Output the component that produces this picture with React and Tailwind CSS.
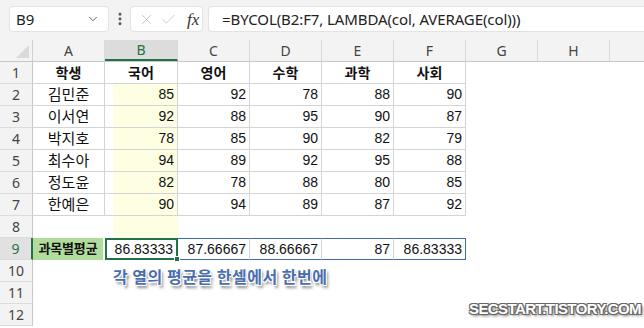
import React from "react";
import { ChevronDown, EllipsisVertical, X, Check } from "lucide-react";

const cols = [
  { key: "A", w: "w-[72px]" },
  { key: "B", w: "w-[73px]" },
  { key: "C", w: "w-[72px]" },
  { key: "D", w: "w-[72px]" },
  { key: "E", w: "w-[72px]" },
  { key: "F", w: "w-[72px]" },
  { key: "G", w: "w-[72px]" },
  { key: "H", w: "w-[72px]" },
];

const heads = ["학생", "국어", "영어", "수학", "과학", "사회"];

const rows = [
  ["김민준", 85, 92, 78, 88, 90],
  ["이서연", 92, 88, 95, 90, 87],
  ["박지호", 78, 85, 90, 82, 79],
  ["최수아", 94, 89, 92, 95, 88],
  ["정도윤", 82, 78, 88, 80, 85],
  ["한예은", 90, 94, 89, 87, 92],
];

const avgs = ["86.83333", "87.66667", "88.66667", "87", "86.83333"];

const line = "border-[#d4d4d4]";
const num = "font-['Liberation_Sans',sans-serif] text-[14px]";
const yellow = "bg-[linear-gradient(to_right,transparent_8px,#fefee3_8px)]";

function RowHead({ n, active }) {
  return (
    <div
      className={
        "w-[33px] shrink-0 h-full flex items-center justify-center text-[14px] border-b border-[#dcdcdc] " +
        (active
          ? "bg-[#e1e1e1] text-[#217346] border-r-2 border-r-[#217346]"
          : "bg-[#f3f3f3] text-[#444] border-r border-r-[#c8c8c8]")
      }
    >
      {n}
    </div>
  );
}

function Cell({ w, className = "", children }) {
  return <div className={`${w} shrink-0 h-full flex items-center px-[3px] whitespace-nowrap ${className}`}>{children}</div>;
}

export default function App() {
  return (
    <div className="relative w-[644px] h-[328px] overflow-hidden bg-white font-['Noto_Sans','Noto_Sans_CJK_KR',sans-serif] text-[#111]">
      {/* formula bar */}
      <div className="h-[40px] bg-[#f3f3f3] flex items-start pt-[6px] pl-[9px]">
        <div className="w-[100px] h-[26px] rounded-[4px] bg-white border border-[#e3e3e3] flex items-center justify-between pl-[6px] pr-[8px]">
          <span className="text-[15px] text-[#222]">B9</span>
          <ChevronDown size={14} strokeWidth={1.6} className="text-[#555]" />
        </div>
        <div className="w-[21px] h-[26px] flex items-center justify-center">
          <EllipsisVertical size={16} strokeWidth={2.4} className="text-[#555]" />
        </div>
        <div className="w-[73px] h-[26px] rounded-[4px] bg-white border border-[#e3e3e3] flex items-center pl-[7px] gap-[5px]">
          <X size={17} strokeWidth={1.2} className="text-[#c2c2c2]" />
          <Check size={17} strokeWidth={1.2} className="text-[#c2c2c2]" />
          <span className="ml-[5px] font-['Liberation_Serif',serif] italic text-[17px] text-[#333] leading-none">fx</span>
        </div>
        <div className="ml-[5px] flex-1 h-[26px] rounded-l-[4px] bg-white border border-r-0 border-[#e3e3e3] flex items-center pl-[13px]">
          <span className="text-[15px] text-[#222] tracking-[-0.1px]">=BYCOL(B2:F7, LAMBDA(col, AVERAGE(col)))</span>
        </div>
      </div>

      {/* column headers */}
      <div className="flex h-[22px] bg-[#f3f3f3] border-b border-[#c8c8c8]">
        <div className="relative w-[33px] shrink-0 border-r border-[#d0d0d0]">
          <div className="absolute right-[3px] bottom-[3px] w-0 h-0 border-l-[13px] border-l-transparent border-b-[13px] border-b-[#dadada]" />
        </div>
        {cols.map((c) => (
          <div
            key={c.key}
            className={
              c.w +
              " shrink-0 flex items-center justify-center text-[14px] border-r border-[#dadada] " +
              (c.key === "B" ? "bg-[#dcdcdc] text-[#217346] border-b-2 border-b-[#217346]" : "text-[#444]")
            }
          >
            {c.key}
          </div>
        ))}
        <div className="flex-1" />
      </div>

      {/* row 1 */}
      <div className="flex h-[22px]">
        <RowHead n={1} />
        {heads.map((h, i) => (
          <Cell key={h} w={cols[i].w} className={`justify-center font-bold text-[14px] border-r border-b ${line}`}>
            {h}
          </Cell>
        ))}
      </div>

      {rows.map((r, ri) => (
        <div key={ri} className="flex h-[22px]">
          <RowHead n={ri + 2} />
          {r.map((v, i) => (
            <Cell
              key={i}
              w={cols[i].w}
              className={
                `border-r border-b ${line} ` +
                (i === 0 ? "justify-center text-[15px]" : "justify-end " + num) +
                (i === 1 ? " " + yellow : "")
              }
            >
              {v}
            </Cell>
          ))}
        </div>
      ))}

      {/* row 8 */}
      <div className="flex h-[22px]">
        <RowHead n={8} />
        <Cell w={cols[0].w} />
        <Cell w={cols[1].w} className={yellow} />
      </div>

      {/* row 9 */}
      <div className="flex h-[22px]">
        <RowHead n={9} active />
        <Cell w={cols[0].w} className="justify-center px-0 bg-[#b1dc9c] font-bold text-[13px] tracking-[-0.2px] border-r-2 border-white">
          과목별평균
        </Cell>
        <Cell w={cols[1].w} className={"relative justify-end border-2 border-[#217346] " + num}>
          {avgs[0]}
          <div className="absolute -right-[4px] -bottom-[4px] w-[6px] h-[6px] bg-[#217346] border border-white" />
        </Cell>
        {avgs.slice(1).map((v, i) => (
          <Cell
            key={i}
            w={cols[i + 2].w}
            className={
              "justify-end border-y border-y-[#3f68b5] " +
              num +
              (i === 3 ? " border-r border-r-[#3f68b5]" : " border-r border-r-[#d4d4d4]")
            }
          >
            {v}
          </Cell>
        ))}
      </div>

      {[10, 11, 12].map((n) => (
        <div key={n} className="flex h-[22px]">
          <RowHead n={n} />
        </div>
      ))}

      {/* annotation */}
      <div className="absolute left-[113px] top-[264px] text-[16px] font-bold text-[#4a6eae] tracking-[0.5px] font-['Noto_Sans_CJK_KR',sans-serif] [text-shadow:-1px_-1px_0_#fff,1px_-1px_0_#fff,-1px_1px_0_#fff,1px_1px_0_#fff,0_-1px_0_#fff,0_1px_0_#fff,2px_3px_3px_rgba(0,0,0,0.55)]">
        각 열의 평균을 한셀에서 한번에
      </div>

      {/* watermark */}
      <div className="absolute left-[469px] top-[298px] text-[15px] font-bold text-white tracking-[-0.6px] font-['Liberation_Sans',sans-serif] [text-shadow:-1px_-1px_0_#666,1px_-1px_0_#666,-1px_1px_0_#666,1px_1px_0_#666,2px_2px_3px_rgba(0,0,0,0.6)]">
        SECSTART.TISTORY.COM
      </div>
    </div>
  );
}
